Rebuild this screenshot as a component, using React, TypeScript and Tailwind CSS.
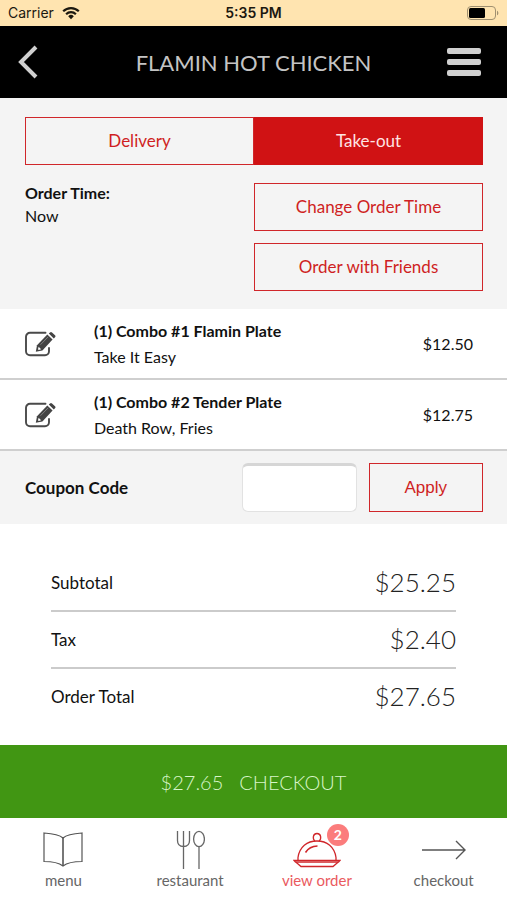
import React from 'react';

interface OrderItem {
  name: string;
  detail: string;
  price: string;
}

const items: OrderItem[] = [
  { name: '(1) Combo #1 Flamin Plate', detail: 'Take It Easy', price: '$12.50' },
  { name: '(1) Combo #2 Tender Plate', detail: 'Death Row, Fries', price: '$12.75' },
];

const totals = [
  { label: 'Subtotal', value: '$25.25' },
  { label: 'Tax', value: '$2.40' },
  { label: 'Order Total', value: '$27.65' },
];

const outlineButton = 'h-12 w-full border border-[#d0262a] text-[17px] leading-6 text-[#cf1f23]';

const WifiIcon = () => (
  <svg width="18" height="14" viewBox="0 0 18 14" fill="none" stroke="#1c1810" strokeWidth="2.2">
    <path d="M1.2 5.3a11 11 0 0 1 15.6 0" />
    <path d="M4.1 8.2a7 7 0 0 1 9.8 0" />
    <path d="M9 13.2 6.2 10.2a4 4 0 0 1 5.6 0Z" fill="#1c1810" stroke="none" />
  </svg>
);

const BatteryIcon = () => (
  <svg width="32" height="14" viewBox="0 0 32 14">
    <rect x="0.5" y="0.5" width="28" height="13" rx="3.5" fill="none" stroke="#a09070" />
    <rect x="2" y="2" width="16" height="10" rx="1.5" fill="#000" />
    <path d="M30 4.7c1.8.7 1.8 3.9 0 4.6Z" fill="#a09070" />
  </svg>
);

const EditIcon = () => (
  <svg width="31" height="26" viewBox="0 0 31 26">
    <path
      d="M20.5 1.8H5a4 4 0 0 0-4 4v14.4a4 4 0 0 0 4 4h15a4 4 0 0 0 4-4V17"
      fill="none"
      stroke="#4a4a4a"
      strokeWidth="1.9"
      strokeLinecap="round"
    />
    <path d="M22.3 3.6 27.6 8.6 17.4 19.4 10.8 20.8 12 14.2Z" fill="#444" />
    <path d="m13.6 15.8 2.5 2.4-2.4.8-.7-.7Z" fill="#fff" />
    <path d="m15.5 13.7 7.7-7.9" stroke="#999" strokeWidth="0.7" />
    <path d="m23.8 2.6 1.2-1.2a1.5 1.5 0 0 1 2 0l3 2.8a1.4 1.4 0 0 1 0 2l-1.2 1.2Z" fill="#444" />
  </svg>
);

const MenuIcon = () => (
  <svg width="40" height="36" viewBox="0 0 40 36" fill="none" stroke="#555" strokeWidth="1.2">
    <path d="M20 6C15.5 2 8 1.500 1 1v28.500c7 0 14.500 1 19 4.500 4.500-3.500 12-4.500 19-4.500V1c-7 .5-14.500 1-19 5Z" />
    <path d="M20 6v28" strokeWidth="1.6" />
  </svg>
);

const RestaurantIcon = () => (
  <svg width="30" height="40" viewBox="0 0 30 40" fill="none" stroke="#666" strokeWidth="1.3">
    <path d="M2.500 1v9.500c0 3.500 2 6 6 6s6-2.500 6-6V1M8.500 1v38" />
    <path d="M24 17v22" />
    <ellipse cx="24" cy="9" rx="5.400" ry="7.700" />
  </svg>
);

const ClocheIcon = () => (
  <svg width="48" height="36" viewBox="0 0 48 36" fill="none" stroke="#d0262a" strokeWidth="1.3">
    <path d="M1 28.500h46l-1.500 1.700h-43Z" />
    <path d="M3 30.200 8 34.500h32l5-4.300" />
    <path d="M5 28.500v-3C6.500 15 14 9 24 9s17.500 6 19 16.500v3" />
    <path d="M22 9c-2.500-1.500-2.500-7.500 2-7.500s4.500 6 2 7.500" />
    <path d="M12.500 20.500c2.500-4 6.500-6.300 12-6.500" strokeWidth="1.6" />
  </svg>
);

const ArrowIcon = () => (
  <svg width="44" height="20" viewBox="0 0 44 20" fill="none" stroke="#555" strokeWidth="1.4">
    <path d="M0 10h43M34 1l9 9-9 9" />
  </svg>
);

interface NavItemProps {
  label: string;
  icon: React.ReactNode;
  active?: boolean;
  badge?: string;
}

const NavItem: React.FC<NavItemProps> = ({ label, icon, active, badge }) => {
  return (
    <a href="#" className={`flex flex-1 flex-col items-center ${active ? 'text-[#ea5a5e]' : 'text-[#666]'}`}>
      <span className="relative flex h-10 items-center justify-center">
        {icon}
        {badge && (
          <span className="absolute -top-1.5 -right-2 flex size-[22px] items-center justify-center rounded-full bg-[#fb7c7c] text-sm font-bold text-white">
            {badge}
          </span>
        )}
      </span>
      <span className="text-[15px] leading-5">{label}</span>
    </a>
  );
};

const App: React.FC = () => {
  return (
    <div className="min-h-screen bg-white font-['Lato',sans-serif] text-base text-[#111]">
      <div className="grid h-[26px] grid-cols-3 items-center bg-[#ffe4b0] px-2 font-['Inter',sans-serif] text-sm text-[#1c1810]">
        <div className="flex items-center gap-2">
          <span>Carrier</span>
          <WifiIcon />
        </div>
        <span className="text-center font-semibold">5:35 PM</span>
        <div className="flex justify-end">
          <BatteryIcon />
        </div>
      </div>

      <header className="flex h-[72px] items-center justify-between bg-black pr-[26px] pl-[18px]">
        <button type="button" aria-label="Back" className="w-[42px]">
          <svg width="20" height="34" viewBox="0 0 20 34" fill="none" stroke="#d0d0d0" strokeWidth="4">
            <path d="M18 2 3 17l15 15" />
          </svg>
        </button>
        <h1 className="text-[22px] text-[#c4c4c4]">FLAMIN HOT CHICKEN</h1>
        <button type="button" aria-label="Open menu" className="flex w-[34px] flex-col gap-[5px]">
          <span className="h-1.5 rounded-xs bg-[#d0d0d0]" />
          <span className="h-1.5 rounded-xs bg-[#d0d0d0]" />
          <span className="h-1.5 rounded-xs bg-[#d0d0d0]" />
        </button>
      </header>

      <main>
        <section className="bg-[#f4f4f4] pt-[19px] pr-6 pb-[18px] pl-[25px]">
          <div className="grid grid-cols-2">
            <button type="button" className={outlineButton}>Delivery</button>
            <button type="button" className="h-12 bg-[#d01214] text-[17px] leading-6 text-[#ffe3e3]">Take-out</button>
          </div>
          <div className="mt-4 grid grid-cols-2">
            <div className="leading-[23px]">
              <p className="font-bold">Order Time:</p>
              <p>Now</p>
            </div>
            <div className="mt-0.5 flex flex-col gap-3">
              <button type="button" className={outlineButton}>Change Order Time</button>
              <button type="button" className={outlineButton}>Order with Friends</button>
            </div>
          </div>
        </section>

        <ul>
          {items.map((item) => (
            <li key={item.name} className="flex h-[71px] items-center border-b-2 border-[#cfcfcf] pr-[34px] pl-[25px]">
              <button type="button" aria-label="Edit item" className="mr-[38px]">
                <EditIcon />
              </button>
              <div className="flex-1 leading-[26px]">
                <p className="font-bold">{item.name}</p>
                <p>{item.detail}</p>
              </div>
              <span>{item.price}</span>
            </li>
          ))}
        </ul>

        <form className="flex h-[73px] items-center bg-[#f4f4f4] pr-6 pl-[25px]" onSubmit={(e) => e.preventDefault()}>
          <label htmlFor="coupon" className="flex-1 text-[17px] font-bold">Coupon Code</label>
          <input
            id="coupon"
            type="text"
            className="mr-3 h-[49px] w-1/4 rounded-md border border-t-[3px] border-[#e2e2e2] border-t-[#d6d6d6] bg-white px-2"
          />
          <button type="submit" className="h-[49px] w-1/4 border border-[#d0262a] font-['Liberation_Sans',sans-serif] text-[17px] text-[#cf1f23]">
            Apply
          </button>
        </form>

        <dl className="px-[51px] pt-[31px] pb-[19px]">
          {totals.map((row) => (
            <div key={row.label} className="flex h-[57px] items-center justify-between border-b-2 border-[#cbcbcb] last:border-transparent">
              <dt className="text-[17px]">{row.label}</dt>
              <dd className="text-[26px] font-light text-[#222]">{row.value}</dd>
            </div>
          ))}
        </dl>
      </main>

      <button type="button" className="flex h-[73px] w-full items-center justify-center gap-4 bg-[#419613] text-xl font-light text-[#d8f5c8]">
        <span>$27.65</span>
        <span>CHECKOUT</span>
      </button>

      <nav className="flex pt-3 pb-2">
        <NavItem label="menu" icon={<MenuIcon />} />
        <NavItem label="restaurant" icon={<RestaurantIcon />} />
        <NavItem label="view order" icon={<ClocheIcon />} active badge="2" />
        <NavItem label="checkout" icon={<ArrowIcon />} />
      </nav>
    </div>
  );
};

export default App;
